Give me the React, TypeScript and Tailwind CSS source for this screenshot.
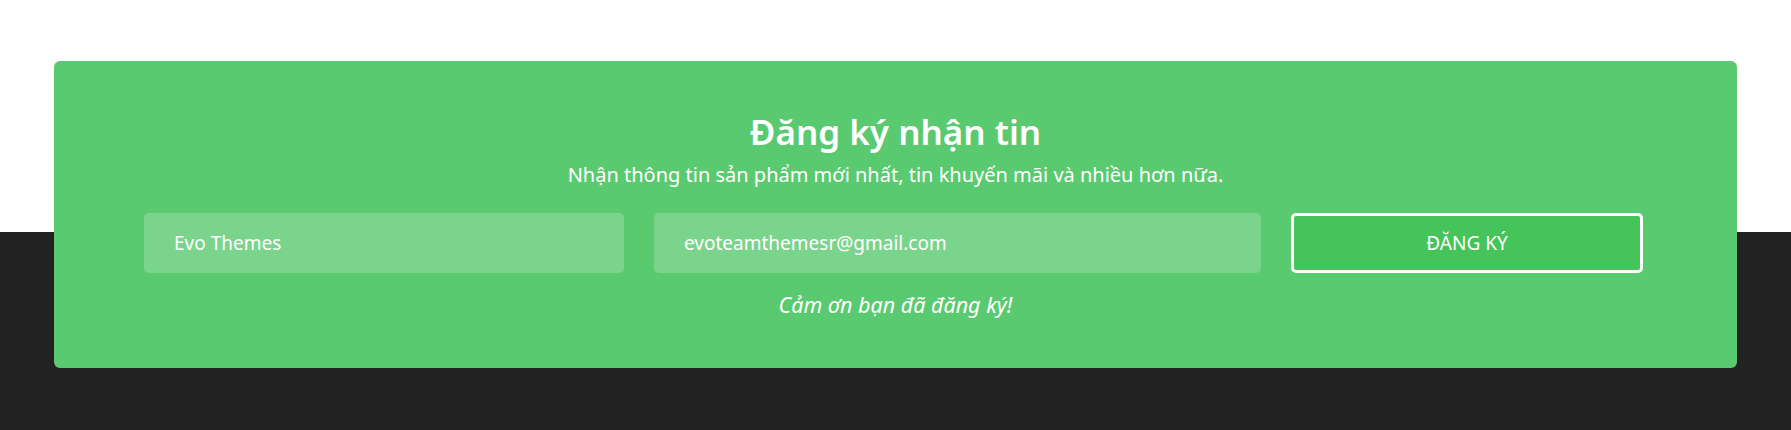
import React from "react";

export default function App() {
  return (
    <div
      className="w-full h-[430px] bg-[linear-gradient(to_bottom,#ffffff_232px,#222222_232px)] pt-[61px] px-[54px]"
      style={{ fontFamily: '"Noto Sans", "Open Sans", sans-serif' }}
    >
      <div className="h-[307px] rounded-[6px] bg-[#5ACA70] pt-[48px] px-[90px] text-white text-center">
        <h2 className="text-[35px] leading-[46px] font-semibold">Đăng ký nhận tin</h2>
        <p className="mt-[6px] text-[20px] leading-[28px]">
          Nhận thông tin sản phẩm mới nhất, tin khuyến mãi và nhiều hơn nữa.
        </p>
        <form
          className="mt-[24px] grid grid-cols-[480px_607px_352px] gap-x-[30px]"
          onSubmit={(e) => e.preventDefault()}
        >
          <input
            readOnly
            defaultValue="Evo Themes"
            className="h-[60px] rounded-[5px] bg-white/20 pl-[30px] text-[19px] text-white outline-none"
          />
          <input
            readOnly
            defaultValue="evoteamthemesr@gmail.com"
            className="h-[60px] rounded-[5px] bg-white/20 pl-[30px] text-[19px] text-white outline-none"
          />
          <button
            type="submit"
            className="h-[60px] rounded-[5px] border-[3px] border-white bg-[#45C45C] text-[19px] text-white"
          >
            ĐĂNG KÝ
          </button>
        </form>
        <p className="mt-[18px] text-[21.5px] leading-[28px] italic">Cảm ơn bạn đã đăng ký!</p>
      </div>
    </div>
  );
}
